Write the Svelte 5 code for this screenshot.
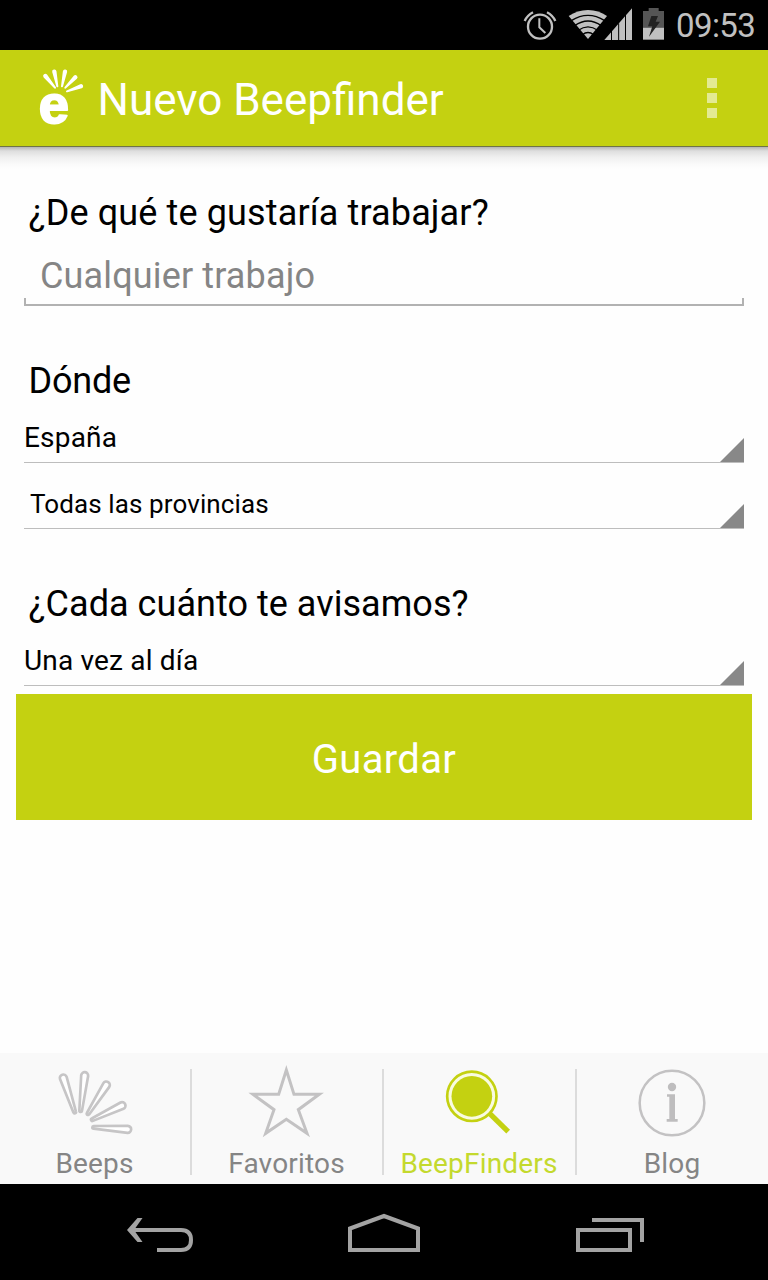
<script>
  // Outline of a tapered petal with rounded ends, from outer cap to inner tip
  function petal([ax, ay, bx, by], ra = 10.5, rb = 4) {
    const len = Math.hypot(bx - ax, by - ay);
    const nx = -(by - ay) / len;
    const ny = (bx - ax) / len;
    return `M${ax + nx * ra} ${ay + ny * ra}A${ra} ${ra} 0 0 1 ${ax - nx * ra} ${ay - ny * ra}` +
      `L${bx - nx * rb} ${by - ny * rb}A${rb} ${rb} 0 0 1 ${bx + nx * rb} ${by + ny * rb}Z`;
  }

  const petals = [
    [100, 84, 134, 186],
    [164, 77, 152, 182],
    [229, 105, 174, 191],
    [276, 167, 187, 209],
    [293, 238, 191, 232]
  ];

  const rays = [
    [77, 78, 106, 113],
    [104, 65, 113, 109],
    [136, 65, 127, 109],
    [167, 82, 137, 113],
    [184, 109, 142, 124]
  ];

  const tabs = [
    { id: 'beeps', label: 'Beeps' },
    { id: 'favoritos', label: 'Favoritos' },
    { id: 'finders', label: 'BeepFinders' },
    { id: 'blog', label: 'Blog' }
  ];
  let active = $state('finders');
  let job = $state('');
</script>

{#snippet spinner(text, cls)}
  <button class="spinner {cls}" type="button">
    <span>{text}</span>
    <svg class="corner" width="24" height="24" viewBox="0 0 24 24"><path d="M24 0V24H0Z" fill="#888" /></svg>
  </button>
{/snippet}

<div class="screen">
  <header class="status">
    <svg width="128" height="50" viewBox="30 0 384 150" aria-hidden="true">
      <g fill="none" stroke="#c0c0c0" stroke-width="7">
        <circle cx="90" cy="80" r="36" />
        <path d="M88 55V82L106 99" stroke-width="6" />
        <path d="M44 63Q52 46 69 37M111 37Q128 46 136 63" />
      </g>
      <path d="M234 117L176 48Q202 30 234 30T291 48Z" fill="#c0c0c0" />
      <g fill="none" stroke="#000" stroke-width="4">
        <path d="M184 62Q234 30 284 62M194 77Q234 49 274 77M205 91Q234 70 263 91M217 104Q234 91 251 104" />
      </g>
      <path d="M283 120L366 25V120Z" fill="#c0c0c0" />
      <path d="M304.500 90V120M326 70V120M346.500 45V120" stroke="#000" stroke-width="3" />
    </svg>
    <svg class="battery" width="21" height="32" viewBox="399 25 63 96" aria-hidden="true">
      <path d="M399 34H416V25H446V34H462V84H399Z" fill="#555" />
      <path d="M399 84H462V120H399Z" fill="#c0c0c0" />
      <path d="M424 49H444L437 66H450L417 111L427 80H414Z" fill="#222" />
    </svg>
    <time>09:53</time>
  </header>

  <div class="bar">
    <svg class="logo" width="55" height="70" viewBox="40 48 165 210" aria-hidden="true">
      <text x="57" y="220" class="logo-e">e</text>
      <g fill="#fff">
        {#each rays as ray}<path d={petal(ray, 6.5, 3)} />{/each}
      </g>
    </svg>
    <h1>Nuevo Beepfinder</h1>
    <button class="more" type="button" aria-label="Más opciones"><i></i><i></i><i></i></button>
  </div>

  <main>
    <h2>¿De qué te gustaría trabajar?</h2>
    <div class="field"><input bind:value={job} placeholder="Cualquier trabajo" /></div>

    <h2 class="where">Dónde</h2>
    {@render spinner('España', 'country')}
    {@render spinner('Todas las provincias', 'province')}

    <h2 class="often">¿Cada cuánto te avisamos?</h2>
    {@render spinner('Una vez al día', 'freq')}

    <button class="save" type="button">Guardar</button>
  </main>

  <nav class="tabs">
    {#each tabs as tab}
      <button class="tab {tab.id}" class:active={active === tab.id} onclick={() => (active = tab.id)}>
        {#if tab.id === 'beeps'}
          <svg width="180" height="90" viewBox="-72 9 540 270">
            <g fill="#fff" stroke="#c6c5c6" stroke-width="8">
              {#each petals as p}<path d={petal(p)} />{/each}
            </g>
          </svg>
        {:else if tab.id === 'favoritos'}
          <svg width="180" height="90" viewBox="-36 9 540 270">
            <path d="M229 60L252 133H328L265 179L291 250L229 208L167 250L192 179L129 133H206Z" fill="none" stroke="#c3c2c3" stroke-width="9" />
          </svg>
        {:else if tab.id === 'finders'}
          <svg width="180" height="90" viewBox="1.500 9 540 270">
            <circle cx="244" cy="139" r="74" fill="#f9fbe0" stroke="#c4d111" stroke-width="8" />
            <circle cx="244" cy="139" r="61" fill="#c4d111" />
            <path d="M297 190L353 245" stroke="#c4d111" stroke-width="16" />
          </svg>
        {:else}
          <svg width="180" height="90" viewBox="-51 9 540 270">
            <circle cx="216" cy="159" r="97" fill="none" stroke="#c3c2c3" stroke-width="7.500" />
            <circle cx="216" cy="111" r="12.500" fill="#bebdbe" />
            <path d="M201 133H225V207H233V215H200V207H208V140H201Z" fill="#bebdbe" />
          </svg>
        {/if}
        <span>{tab.label}</span>
      </button>
    {/each}
  </nav>

  <footer class="nav">
    <svg width="768" height="96" viewBox="0 1184 768 96" fill="none" stroke="#a3a3a3" stroke-width="4" aria-hidden="true">
      <path d="M157 1250H181Q191 1250 191 1240T181 1230H131" />
      <path d="M137.500 1218H142.500L134 1230L142.500 1242H137.500L127 1230Z" fill="#a3a3a3" stroke="none" />
      <path d="M350 1250V1228.500L384 1216L418 1228.500V1250Z" />
      <path d="M578 1230H630V1250H578ZM592 1220H642V1242" />
    </svg>
  </footer>
</div>

<style>
  :global(body) { margin: 0; }
  .screen {
    width: 768px;
    height: 1280px;
    display: flex;
    flex-direction: column;
    overflow: hidden;
    background: #fefefe;
    font-family: Roboto, "Liberation Sans", sans-serif;
    color: #000;
  }
  button, input {
    font: inherit;
    color: inherit;
    border: 0;
    padding: 0;
    margin: 0;
    background: none;
    border-radius: 0;
    outline: 0;
  }
  svg { display: block; flex: none; }
  h1, h2 { margin: 0; font-weight: 400; white-space: nowrap; }

  .status {
    height: 50px;
    box-sizing: border-box;
    padding-right: 12px;
    display: flex;
    justify-content: flex-end;
    background: #000;
    color: #c0c0c0;
  }
  .battery { margin: 8px 12px 0 -5px; }
  .status time { width: 80px; font-size: 33px; line-height: 52px; letter-spacing: -0.6px; }

  .bar {
    height: 96px;
    display: flex;
    align-items: flex-start;
    background: #c4d111;
    color: #fff;
    border-bottom: 1px solid #6f7347;
    flex: none;
  }
  .logo { margin: 16px 0 0 33px; }
  .logo-e {
    font: bold 163px "Liberation Sans", sans-serif;
    fill: #fff;
    stroke: #fff;
    stroke-width: 6;
    stroke-linejoin: round;
  }
  h1 { margin-left: 9.5px; font-size: 44px; line-height: 100px; }
  .more { margin: 28px 51px 0 auto; display: grid; gap: 5px; }
  .more i { width: 10px; height: 10px; background: #e3ea93; }

  main {
    height: 906px;
    box-sizing: border-box;
    padding: 45px 24px 0;
    display: flex;
    flex-direction: column;
    background: linear-gradient(#b5b5b5, #dedede 4px, #efefef 10px, #fafafa 17px, #fefefe 22px);
  }
  h2 { padding-left: 4.5px; font-size: 36px; line-height: 42px; letter-spacing: 0.13px; }
  .field {
    height: 72px;
    box-sizing: border-box;
    padding: 21px 16px 9px;
    background:
      linear-gradient(#b2b2b2, #b2b2b2) 0 100% / 100% 2px no-repeat,
      linear-gradient(#b2b2b2, #b2b2b2) 0 100% / 2px 8px no-repeat,
      linear-gradient(#b2b2b2, #b2b2b2) 100% 100% / 2px 8px no-repeat;
  }
  .field input { width: 100%; height: 42px; font-size: 36px; letter-spacing: 0.14px; }
  .field input::placeholder { color: #858585; opacity: 1; }
  .where, .often { margin-top: 54px; }
  .where { letter-spacing: -0.2px; padding-left: 4.5px; }
  .often { letter-spacing: 0.04px; }
  .spinner {
    display: flex;
    justify-content: space-between;
    align-items: flex-end;
    height: 61px;
    flex: none;
    border-bottom: 1px solid #bdbdbd;
    box-sizing: border-box;
    text-align: left;
    font-size: 28px;
    line-height: 48px;
    letter-spacing: 0.18px;
  }
  .province { height: 66px; padding-left: 6px; font-size: 26px; line-height: 48px; letter-spacing: 0.1px; }
  .save {
    flex: none;
    margin: 8px -8px 0;
    height: 126px;
    box-sizing: border-box;
    padding-top: 6px;
    background: #c4d111;
    color: #fff;
    font-size: 40px;
    line-height: 120px;
    letter-spacing: 0.35px;
  }

  .tabs {
    height: 131px;
    flex: none;
    display: grid;
    grid-template-columns: 192px 192px 193px 191px;
    background: #f9f9f9;
  }
  .tab {
    display: flex;
    flex-direction: column;
    align-items: center;
    color: #858585;
    font-size: 28px;
    background: linear-gradient(#dcdcdc, #dcdcdc) 100% 16px / 2px 106px no-repeat;
  }
  .tab:last-child { background: none; }
  .tab span { line-height: 41px; padding-right: 3px; letter-spacing: 0.18px; }
  .tab:last-child span { padding: 0 1px 0 0; }
  .tab.active { color: #c4d92e; }

  .nav { height: 96px; flex: none; background: #000; }
</style>
